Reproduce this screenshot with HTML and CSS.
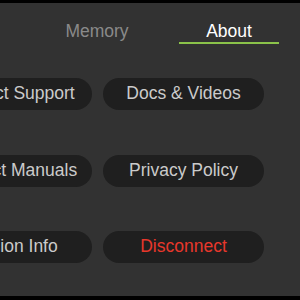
FILE: index.html
```html
<!DOCTYPE html>
<html lang="en">
<head>
    <meta charset="UTF-8">
    <title>About</title>
    <link rel="stylesheet" href="styles.css">
</head>
<body>
    <div class="screen">
        <div class="tabs">
            <div class="tab">Memory</div>
            <div class="tab active">About</div>
        </div>

        <div class="actions">
            <button class="btn">Contact Support</button>
            <button class="btn">Docs &amp; Videos</button>
            <button class="btn">Product Manuals</button>
            <button class="btn">Privacy Policy</button>
            <button class="btn">Version Info</button>
            <button class="btn btn-danger">Disconnect</button>
        </div>
    </div>
</body>
</html>
```

FILE: styles.css
```css
* {
    margin: 0;
    padding: 0;
    box-sizing: border-box;
}

html, body {
    width: 300px;
    height: 300px;
    overflow: hidden;
}

body {
    background: #000;
    font-family: 'Liberation Sans', Arial, sans-serif;
    padding-top: 3px;
}

.screen {
    height: 293px;
    background: #323232;
    overflow: hidden;
}

/* Tab strip */
.tabs {
    display: flex;
    gap: 32px;
    padding-left: 47px;
}

.tab {
    width: 100px;
    padding-top: 18px;
    padding-bottom: 1px;
    line-height: 20px;
    font-size: 17.5px;
    text-align: center;
    color: #8a8a8a;
    border-bottom: 2px solid transparent;
}

.tab.active {
    color: #fff;
    border-bottom-color: #8bc34a;
}

/* Button grid */
.actions {
    display: grid;
    grid-template-columns: 161px 161px;
    column-gap: 11px;
    row-gap: 44.5px;
    margin-top: 34px;
    margin-left: -69px;
    width: 333px;
}

.btn {
    height: 32px;
    border: none;
    border-radius: 16px;
    background: #1f1f1f;
    color: #cbcbcb;
    font-family: inherit;
    font-size: 17.5px;
    line-height: 30px;
    padding-bottom: 2px;
    white-space: nowrap;
    text-align: center;
}

.btn-danger {
    color: #e8372b;
}
```
